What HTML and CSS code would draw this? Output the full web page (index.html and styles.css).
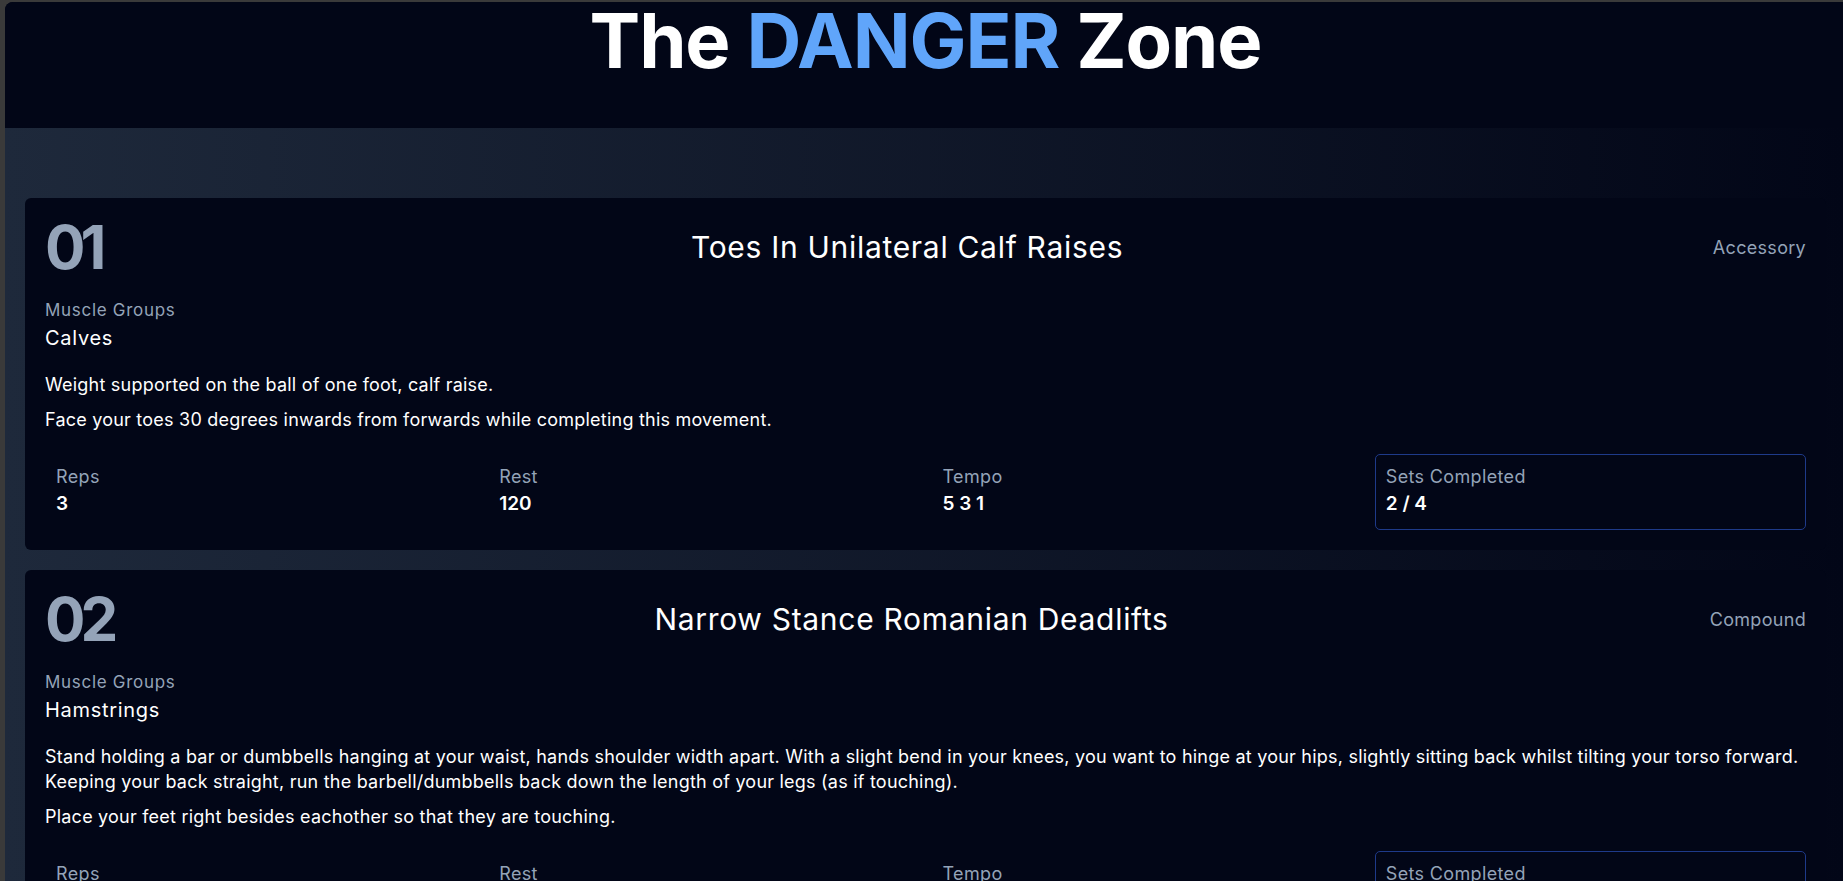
FILE: index.html
```html
<!DOCTYPE html>
<html lang="en">
<head>
<meta charset="utf-8">
<title>The DANGER Zone</title>
<link rel="stylesheet" href="styles.css">
</head>
<body>
<div class="app">
  <header class="top">
    <h1 class="brand">The <span class="brand-accent">DANGER</span> Zone</h1>
  </header>
  <main class="main">
    <section class="card">
      <div class="card-head">
        <div class="card-num">01</div>
        <h2 class="card-title">Toes In Unilateral Calf Raises</h2>
        <div class="card-type">Accessory</div>
      </div>
      <div class="muscle-label">Muscle Groups</div>
      <div class="muscle-value">Calves</div>
      <div class="desc">
        <p class="desc-p">Weight supported on the ball of one foot, calf raise.</p>
        <p class="desc-p">Face your toes 30 degrees inwards from forwards while completing this movement.</p>
      </div>
      <div class="stats">
        <div class="stat"><div class="stat-label">Reps</div><div class="stat-value">3</div></div>
        <div class="stat"><div class="stat-label">Rest</div><div class="stat-value">120</div></div>
        <div class="stat"><div class="stat-label">Tempo</div><div class="stat-value">5 3 1</div></div>
        <div class="stat stat-sets"><div class="stat-label">Sets Completed</div><div class="stat-value">2 / 4</div></div>
      </div>
    </section>
    <section class="card">
      <div class="card-head">
        <div class="card-num">02</div>
        <h2 class="card-title">Narrow Stance Romanian Deadlifts</h2>
        <div class="card-type">Compound</div>
      </div>
      <div class="muscle-label">Muscle Groups</div>
      <div class="muscle-value">Hamstrings</div>
      <div class="desc">
        <p class="desc-p">Stand holding a bar or dumbbells hanging at your waist, hands shoulder width apart. With a slight bend in your knees, you want to hinge at your hips, slightly sitting back whilst tilting your torso forward. Keeping your back straight, run the barbell/dumbbells back down the length of your legs (as if touching).</p>
        <p class="desc-p">Place your feet right besides eachother so that they are touching.</p>
      </div>
      <div class="stats">
        <div class="stat"><div class="stat-label">Reps</div><div class="stat-value">8</div></div>
        <div class="stat"><div class="stat-label">Rest</div><div class="stat-value">90</div></div>
        <div class="stat"><div class="stat-label">Tempo</div><div class="stat-value">3 1 1</div></div>
        <div class="stat stat-sets"><div class="stat-label">Sets Completed</div><div class="stat-value">0 / 3</div></div>
      </div>
    </section>
  </main>
</div>
</body>
</html>
```

FILE: styles.css
```css
html, body {
  margin: 0;
  padding: 0;
}
body {
  background: #3a3a3a;
  overflow: hidden;
  font-family: Inter, "Open Sans", sans-serif;
  color: #ffffff;
}
.app {
  margin: 2px 0 0 5px;
  width: 1841px;
  border-top-left-radius: 8px;
  overflow: hidden;
  background: #020617;
  min-height: 900px;
}
.top {
  background: #020617;
  padding: 0 0 50px;
  text-align: center;
}
.brand {
  margin: 0;
  font-size: 76px;
  line-height: 76px;
  font-weight: 700;
  letter-spacing: -1.1px;
  color: #ffffff;
}
.brand-accent {
  color: #60a5fa;
}
.main {
  background: linear-gradient(to right, #1e293b 0%, #020617 100%);
  padding: 70px 20px 20px;
  display: flex;
  flex-direction: column;
  gap: 20px;
}
.card {
  background: #020617;
  border-radius: 6px;
  padding: 20px;
}
.card-head {
  display: flex;
  align-items: center;
}
.card-num {
  font-size: 60px;
  line-height: 58px;
  font-weight: 700;
  color: #94a3b8;
  letter-spacing: -5px;
}
.card-title {
  flex: 1;
  margin: 0;
  text-align: center;
  font-size: 30px;
  line-height: 40px;
  font-weight: 400;
  letter-spacing: 0.7px;
  color: #ffffff;
}
.card-type {
  font-size: 18px;
  line-height: 27px;
  letter-spacing: 0.3px;
  color: #94a3b8;
}
.muscle-label {
  margin-top: 22px;
  font-size: 17px;
  line-height: 24px;
  letter-spacing: 0.7px;
  color: #94a3b8;
}
.muscle-value {
  margin-top: 3px;
  font-size: 20px;
  line-height: 27px;
  letter-spacing: 0.7px;
  color: #ffffff;
}
.desc {
  margin-top: 20px;
}
.desc-p {
  margin: 0 0 10px;
  font-size: 18px;
  line-height: 25px;
  letter-spacing: 0.22px;
  color: #ffffff;
}
.desc-p:last-child {
  margin-bottom: 0;
}
.stats {
  margin-top: 22px;
  display: grid;
  grid-template-columns: repeat(4, 1fr);
  gap: 12px;
}
.stat {
  border: 1px solid transparent;
  border-radius: 5px;
  padding: 10px;
}
.stat-sets {
  border-color: #1e3a8a;
}
.stat-label {
  font-size: 18px;
  line-height: 24px;
  letter-spacing: 0.35px;
  color: #94a3b8;
}
.stat-value {
  font-size: 19px;
  line-height: 30px;
  font-weight: 600;
  color: #ffffff;
}
```
